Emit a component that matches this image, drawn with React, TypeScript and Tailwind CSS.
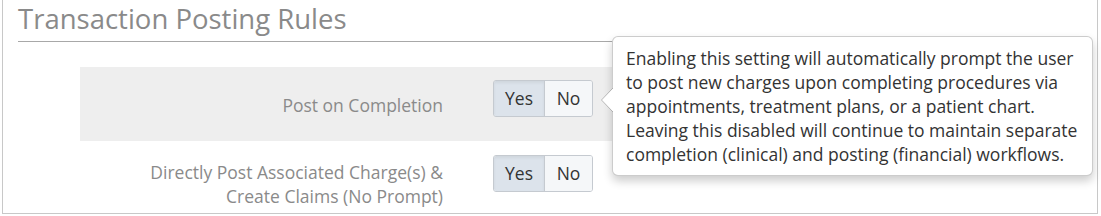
import React from "react";

function Toggle() {
  return (
    <div className="flex h-[37px] w-[100px] rounded-[3px] border border-[#c5cad0] overflow-hidden text-[17.5px] text-[#333]">
      <div className="flex w-[51px] items-center justify-center bg-[#dce3eb] border-r border-[#c5cad0] shadow-[inset_0_2px_3px_rgba(0,0,0,0.06)]">
        Yes
      </div>
      <div className="flex flex-1 items-center justify-center bg-[#f5f7f9]">No</div>
    </div>
  );
}

export default function App() {
  return (
    <div
      className="relative ml-[2px] h-[214px] w-[1096px] border-x border-b border-[#c8c8c8] bg-white"
      style={{ fontFamily: '"Open Sans", "Noto Sans", sans-serif' }}
    >
      <div className="mx-[15px] h-[42px] border-b border-[#a8a8a8]">
        <h1 className="pt-[1px] text-[27.5px] leading-[36px] text-[#8a8a8a]">Transaction Posting Rules</h1>
      </div>
      <div className="ml-[77px] mr-[15px] mt-[25px]">
        <div className="flex h-[74px] bg-[#eeeeee]">
          <div className="w-[363px] pt-[26px] text-right text-[17.5px] leading-[24px] text-[#8a8a8a]">
            Post on Completion
          </div>
          <div className="ml-[50px] pt-[13px]">
            <Toggle />
          </div>
        </div>
        <div className="flex h-[72px]">
          <div className="w-[363px] pt-[19px] text-right text-[17.5px] leading-[24px] text-[#8a8a8a]">
            Directly Post Associated Charge(s) &amp;
            <br />
            Create Claims (No Prompt)
          </div>
          <div className="ml-[50px] pt-[14px]">
            <Toggle />
          </div>
        </div>
      </div>
      <div className="absolute left-[609px] top-[36px] w-[481px] rounded-[6px] border border-[rgba(0,0,0,0.2)] bg-white px-[13px] py-[9px] text-[17.5px] leading-[24px] text-[#333] shadow-[0_5px_10px_rgba(0,0,0,0.2)]">
        <svg className="absolute left-[-12px] top-[51px]" width="12" height="24" viewBox="0 0 12 24">
          <polygon points="12,0 0.5,12 12,24" fill="white" />
          <polyline points="12,0 0.5,12 12,24" fill="none" stroke="rgba(0,0,0,0.25)" strokeWidth="1" />
        </svg>
        Enabling this setting will automatically prompt the user to post new charges upon completing procedures via
        appointments, treatment plans, or a patient chart. Leaving this disabled will continue to maintain separate
        completion (clinical) and posting (financial) workflows.
      </div>
    </div>
  );
}
